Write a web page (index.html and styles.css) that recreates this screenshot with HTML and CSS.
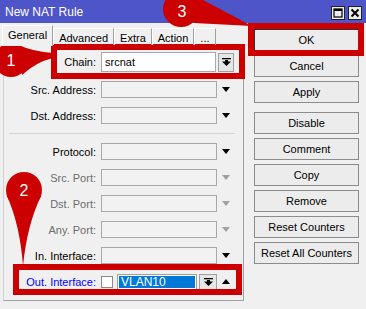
FILE: index.html
```html
<!DOCTYPE html>
<html>
<head>
<meta charset="utf-8">
<link rel="stylesheet" href="styles.css">
</head>
<body>
<div class="win">
  <div class="titlebar">
    <span class="title">New NAT Rule</span>
    <div class="tb-btns">
      <span class="tb-btn"><svg width="10" height="10" viewBox="0 0 10 10"><rect x="1" y="1" width="8" height="8" fill="none" stroke="#000" stroke-width="1.2"/><rect x="1" y="1" width="8" height="2" fill="#000"/></svg></span>
      <span class="tb-btn"><svg width="10" height="10" viewBox="0 0 10 10"><path d="M1.5 1.5 L8.5 8.5 M8.5 1.5 L1.5 8.5" stroke="#000" stroke-width="2"/></svg></span>
    </div>
  </div>
  <div class="main">
    <div class="left">
      <div class="tabs">
        <span class="tab sel">General</span>
        <span class="tab">Advanced</span>
        <span class="tab">Extra</span>
        <span class="tab">Action</span>
        <span class="tab">...</span>
      </div>
      <div class="panel">
        <div class="row chain">
          <span class="label">Chain:</span>
          <span class="field white">srcnat</span>
          <span class="ddbtn big"><svg width="9" height="8" viewBox="0 0 9 8"><rect x="0" y="0" width="9" height="1.3" fill="#000"/><rect x="3" y="2" width="3" height="2" fill="#000"/><path d="M0 3.5 H9 L4.5 8 Z" fill="#000"/></svg></span>
        </div>
        <div class="row">
          <span class="label">Src. Address:</span>
          <span class="field"></span>
          <span class="arrow"></span>
        </div>
        <div class="row">
          <span class="label">Dst. Address:</span>
          <span class="field"></span>
          <span class="arrow"></span>
        </div>
        <div class="sep"></div>
        <div class="row">
          <span class="label">Protocol:</span>
          <span class="field"></span>
          <span class="arrow"></span>
        </div>
        <div class="row dis">
          <span class="label">Src. Port:</span>
          <span class="field"></span>
          <span class="arrow"></span>
        </div>
        <div class="row dis">
          <span class="label">Dst. Port:</span>
          <span class="field"></span>
          <span class="arrow"></span>
        </div>
        <div class="row dis">
          <span class="label">Any. Port:</span>
          <span class="field"></span>
          <span class="arrow"></span>
        </div>
        <div class="row">
          <span class="label">In. Interface:</span>
          <span class="field"></span>
          <span class="arrow"></span>
        </div>
        <div class="row out">
          <span class="label blue">Out. Interface:</span>
          <span class="check"></span>
          <span class="vlan"><span class="vlan-in">VLAN10</span></span>
          <span class="ddbtn"><svg width="9" height="8" viewBox="0 0 9 8"><rect x="0" y="0" width="9" height="1.3" fill="#000"/><rect x="3" y="2" width="3" height="2" fill="#000"/><path d="M0 3.5 H9 L4.5 8 Z" fill="#000"/></svg></span>
          <span class="arrow up"></span>
        </div>
      </div>
    </div>
    <div class="buttons">
      <span class="btn ok">OK</span>
      <span class="btn">Cancel</span>
      <span class="btn grp">Apply</span>
      <span class="btn">Disable</span>
      <span class="btn">Comment</span>
      <span class="btn">Copy</span>
      <span class="btn">Remove</span>
      <span class="btn">Reset Counters</span>
      <span class="btn">Reset All Counters</span>
    </div>
  </div>
  <svg class="annot" width="366" height="309" viewBox="0 0 366 309">
    <g fill="#cc0000">
      <rect x="54" y="47" width="188" height="29" fill="none" stroke="#cc0000" stroke-width="6"/>
      <rect x="16" y="267" width="223" height="25" fill="none" stroke="#cc0000" stroke-width="6"/>
      <rect x="251" y="26" width="110" height="27" fill="none" stroke="#cc0000" stroke-width="6"/>
      <circle cx="11" cy="60" r="17"/>
      <path d="M16 44 Q34 52 53 53 L53 58 Q36 62 22 75 Z"/>
      <circle cx="24" cy="190" r="18"/>
      <path d="M7 196 Q20 225 23 266 Q27 225 41 196 Z"/>
      <circle cx="181" cy="9" r="18"/>
      <path d="M188 -8 L252 26 L194 23 Z"/>
    </g>
    <g class="num">
      <text x="11" y="66">1</text>
      <text x="24" y="196">2</text>
      <text x="182" y="17">3</text>
    </g>
  </svg>
</div>
</body>
</html>
```
FILE: styles.css
```css
* { box-sizing: border-box; }
html, body { margin: 0; padding: 0; }
body {
  background: #f0f0f0;
  font-family: "Liberation Sans", Arial, sans-serif;
  font-size: 11px;
  color: #000;
}
.win {
  position: relative;
  width: 366px;
  height: 309px;
  overflow: hidden;
  background: #f0f0f0;
}
.titlebar {
  height: 23px;
  background: #4e55c9;
  display: flex;
  align-items: flex-start;
  padding: 0 4px 0 5px;
}
.title {
  color: #fff;
  font-size: 12px;
  flex: 1;
  margin-top: 5px;
}
.tb-btns {
  display: flex;
  gap: 3px;
  margin-top: 6px;
}
.tb-btn {
  width: 14px;
  height: 14px;
  background: #ececec;
  border: 1px solid #222;
  display: flex;
  align-items: center;
  justify-content: center;
}
.main {
  display: flex;
  align-items: flex-start;
}
.left {
  width: 242px;
  margin-left: 2px;
  margin-top: 2px;
}
.tabs {
  display: flex;
  align-items: flex-end;
  height: 20px;
  position: relative;
  z-index: 1;
}
.tab {
  height: 17px;
  padding: 0 5px;
  border: 1px solid #fff;
  border-right-color: #a0a0a0;
  border-bottom: none;
  display: flex;
  align-items: center;
  padding-top: 1px;
  white-space: nowrap;
}
.tab.sel {
  height: 21px;
  margin-bottom: -1px;
  background: #f0f0f0;
  padding-top: 0;
  padding-bottom: 2px;
}
.panel {
  margin-left: 1px;
  width: 241px;
  height: 256px;
  border: 1px solid #a0a0a0;
  border-top-color: #fff;
  border-left-color: #d0d0d0;
  padding-top: 6px;
  display: flex;
  flex-direction: column;
  gap: 9px;
}
.row {
  display: flex;
  align-items: center;
  height: 17px;
}
.row.chain { height: 20px; }
.label {
  width: 92px;
  text-align: right;
  margin-right: 5px;
  white-space: nowrap;
}
.field {
  width: 116px;
  height: 17px;
  border: 1px solid #a8a8a8;
  background: #f2f2f2;
}
.chain .field {
  width: 115px;
  height: 20px;
  background: #fff;
  padding: 3px 0 0 3px;
}
.ddbtn {
  width: 18px;
  height: 16px;
  margin-left: 2px;
  border: 1px solid #a0a0a0;
  background: #e6e6e6;
  display: flex;
  align-items: center;
  justify-content: center;
}
.ddbtn.big {
  width: 16px;
  height: 19px;
}
.arrow {
  margin-left: 5px;
  width: 0;
  height: 0;
  border-left: 4.5px solid transparent;
  border-right: 4.5px solid transparent;
  border-top: 5px solid #000;
}
.arrow.up {
  border-top: none;
  border-bottom: 5px solid #000;
}
.dis .label { color: #6d6d6d; }
.dis .arrow { border-top-color: #a0a0a0; }
.blue { color: #0000ff; }
.sep {
  height: 1px;
  margin: 0 8px 0 5px;
  background: #d4d4d4;
}
.check {
  width: 12px;
  height: 12px;
  border: 1px solid #8a8a8a;
  background: #fff;
  margin-right: 4px;
}
.vlan {
  width: 80px;
  height: 16px;
  border: 1px solid #a0a0a0;
  padding: 1px;
  background: #fff;
}
.vlan-in {
  display: block;
  height: 100%;
  background: #0078d7;
  color: #fff;
  font-size: 12px;
  line-height: 12px;
  padding-left: 2px;
}
.buttons {
  margin-left: 10px;
  margin-top: 6px;
  width: 105px;
  display: flex;
  flex-direction: column;
  gap: 4px;
}
.btn {
  height: 22px;
  border: 1px solid #8c8c8c;
  background: #ececec;
  display: flex;
  align-items: center;
  justify-content: center;
  white-space: nowrap;
}
.btn.grp { margin-bottom: 5px; }
.btn.ok { border-color: #333; }
.annot {
  position: absolute;
  left: 0;
  top: 0;
  pointer-events: none;
}
.num text {
  fill: #fff;
  font-family: "Liberation Sans", Arial, sans-serif;
  font-size: 16px;
  text-anchor: middle;
}
```
